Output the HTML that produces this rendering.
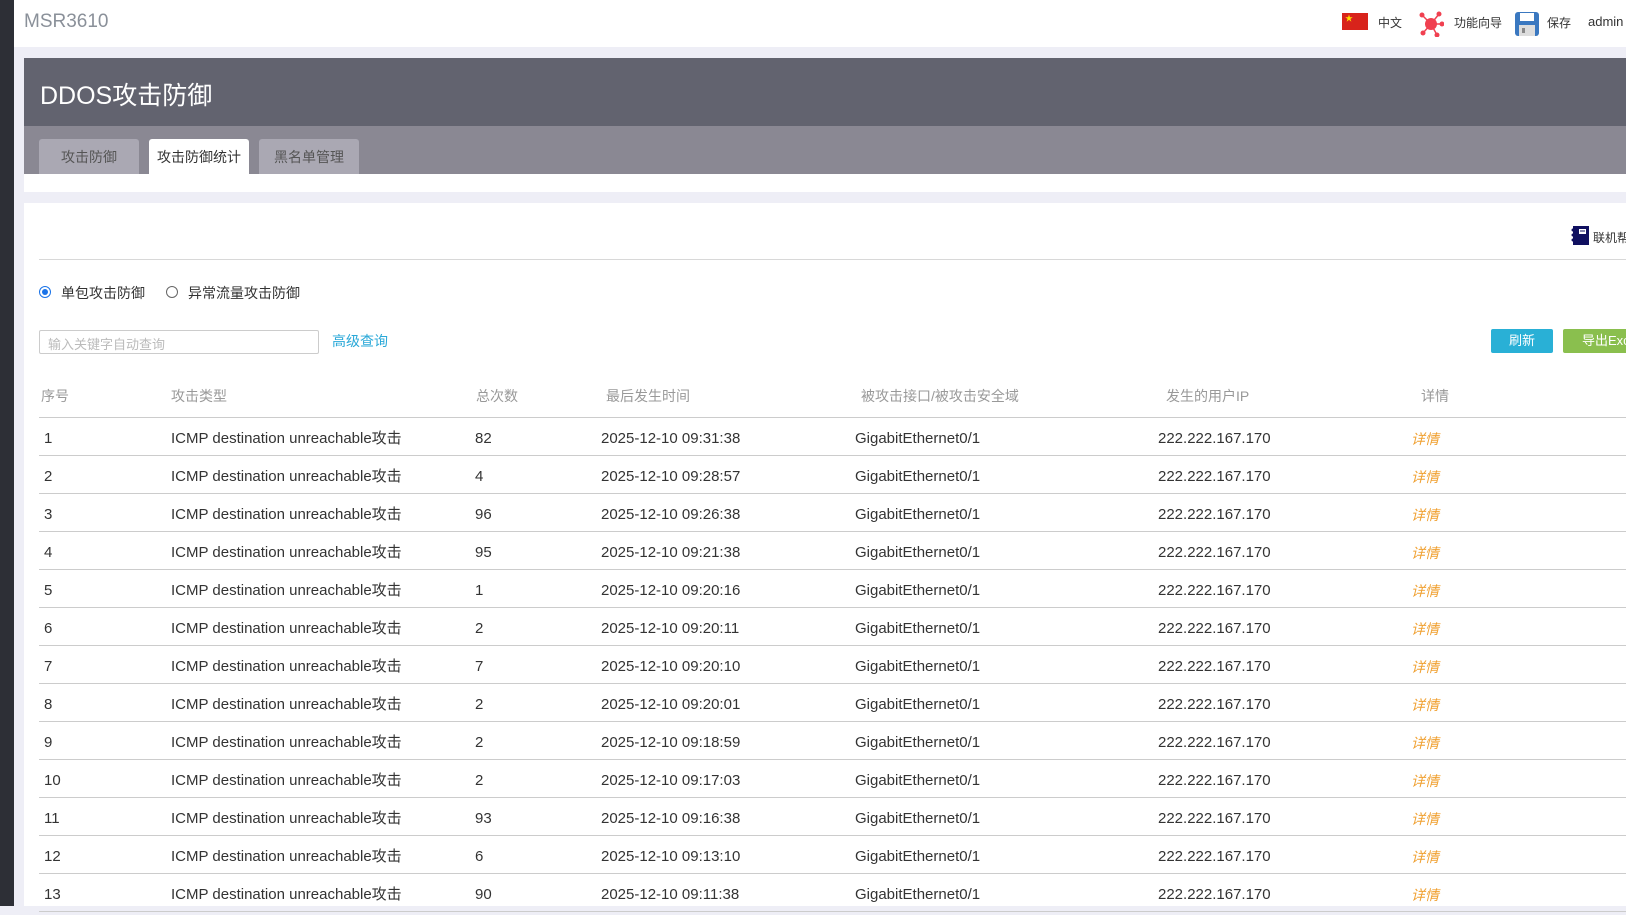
<!DOCTYPE html>
<html><head><meta charset="utf-8"><style>
*{margin:0;padding:0;box-sizing:border-box}
body{width:1626px;height:906px;overflow:hidden;background:#eeeef6;font-family:"Liberation Sans","Noto Sans CJK SC",sans-serif;position:relative;color:#333}
.abs{position:absolute}
.side{left:0;top:0;width:14px;height:906px;background:#2d2f36}
.hdr{left:14px;top:0;width:1612px;height:47px;background:#fff}
.banner{left:24px;top:58px;width:1602px;height:68px;background:#62636f}
.tabs{left:24px;top:126px;width:1602px;height:48px;background:#8a8893}
.tab{top:139px;width:100px;height:35px;background:#aaa8b3;border-radius:3px 3px 0 0;font-size:14px;color:#555;text-align:center;line-height:36px}
.wb{left:24px;top:174px;width:1602px;height:18px;background:#fff}
.content{left:24px;top:203px;width:1602px;height:703px;background:#fff}
.th{top:386px;font-size:14px;color:#999}
.row{left:39px;width:1587px;height:38px;border-bottom:1px solid #ccc;font-size:15px;color:#333}
.row span{position:absolute;top:2px;height:38px;line-height:38px;white-space:nowrap}
.row i{color:#f0a030;font-size:14px}
</style></head><body>
<div class="abs side"></div>
<div class="abs hdr"></div>
<div class="abs" style="left:24px;top:11px;font-size:19px;color:#8a9099">MSR3610</div>
<div class="abs" style="left:1342px;top:13px;width:26px;height:17px;background:#d8231b"><span style="position:absolute;left:3px;top:0;color:#ffdd00;font-size:8px">★</span></div>
<div class="abs" style="left:1378px;top:14px;font-size:12px;color:#333">中文</div>
<svg class="abs" style="left:1418px;top:11px" width="26" height="26" viewBox="0 0 26 26"><g stroke="#f04050" stroke-width="1.5"><line x1="13" y1="13" x2="4" y2="4"/><line x1="13" y1="13" x2="21" y2="3"/><line x1="13" y1="13" x2="24" y2="13"/><line x1="13" y1="13" x2="5" y2="22"/><line x1="13" y1="13" x2="19" y2="24"/></g><g fill="#f04050"><circle cx="13" cy="13" r="6"/><circle cx="4" cy="4" r="2.5"/><circle cx="21" cy="3" r="2.5"/><circle cx="24" cy="13" r="2.5"/><circle cx="5" cy="22" r="2.5"/><circle cx="19" cy="24" r="2.5"/></g></svg>
<div class="abs" style="left:1454px;top:14px;font-size:12px;color:#333">功能向导</div>
<svg class="abs" style="left:1515px;top:12px" width="24" height="24" viewBox="0 0 24 24"><rect x="0" y="0" width="24" height="24" rx="3" fill="#3a78c0"/><rect x="5" y="1" width="14" height="8" fill="#fff"/><rect x="4" y="13" width="16" height="11" fill="#ddd"/><rect x="7" y="16" width="3" height="5" fill="#888"/></svg>
<div class="abs" style="left:1547px;top:14px;font-size:12px;color:#333">保存</div>
<div class="abs" style="left:1588px;top:14px;font-size:13px;color:#333">admin</div>
<div class="abs banner"></div>
<div class="abs" style="left:40px;top:76px;font-size:25px;color:#fff">DDOS攻击防御</div>
<div class="abs tabs"></div>
<div class="abs tab" style="left:39px">攻击防御</div>
<div class="abs tab" style="left:149px;background:#fff;color:#333">攻击防御统计</div>
<div class="abs tab" style="left:259px">黑名单管理</div>
<div class="abs wb"></div>
<div class="abs content"></div>
<svg class="abs" style="left:1571px;top:226px" width="18" height="19" viewBox="0 0 18 19"><rect x="2" y="0" width="16" height="19" fill="#101060"/><rect x="8" y="3" width="7" height="5" fill="#fff"/><rect x="9" y="4.5" width="5" height="1" fill="#101060"/><g fill="#101060"><circle cx="2" cy="4" r="1.5"/><circle cx="2" cy="9" r="1.5"/><circle cx="2" cy="14" r="1.5"/></g></svg>
<div class="abs" style="left:1593px;top:229px;font-size:12px;color:#333;white-space:nowrap">联机帮助</div>
<div class="abs" style="left:39px;top:259px;width:1587px;height:1px;background:#d8d8d8"></div>
<div class="abs" style="left:39px;top:286px;width:12px;height:12px;border:1px solid #1a73e8;border-radius:50%"><div style="margin:2px;width:6px;height:6px;border-radius:50%;background:#1a73e8"></div></div>
<div class="abs" style="left:61px;top:283px;font-size:14px">单包攻击防御</div>
<div class="abs" style="left:166px;top:286px;width:12px;height:12px;border:1px solid #666;border-radius:50%"></div>
<div class="abs" style="left:188px;top:283px;font-size:14px">异常流量攻击防御</div>
<div class="abs" style="left:39px;top:330px;width:280px;height:24px;border:1px solid #ccc;border-radius:2px;font-size:13px;color:#bbb;padding:3px 8px">输入关键字自动查询</div>
<div class="abs" style="left:332px;top:331px;font-size:14px;color:#29a8d8">高级查询</div>
<div class="abs" style="left:1491px;top:329px;width:62px;height:24px;background:#29b0d6;border-radius:2px;color:#fff;font-size:13px;text-align:center;line-height:24px">刷新</div>
<div class="abs" style="left:1563px;top:329px;width:70px;height:24px;background:#8abf4e;border-radius:2px;color:#fff;font-size:13px;padding-left:19px;line-height:24px;white-space:nowrap">导出Excel</div>
<div class="abs th" style="left:41px">序号</div>
<div class="abs th" style="left:171px">攻击类型</div>
<div class="abs th" style="left:476px">总次数</div>
<div class="abs th" style="left:606px">最后发生时间</div>
<div class="abs th" style="left:861px">被攻击接口/被攻击安全域</div>
<div class="abs th" style="left:1166px">发生的用户IP</div>
<div class="abs th" style="left:1421px">详情</div>
<div class="abs" style="left:39px;top:417px;width:1587px;height:1px;background:#ccc"></div>
<div id="rows"></div>
<script>
var d=[["1","82","09:31:38"],["2","4","09:28:57"],["3","96","09:26:38"],["4","95","09:21:38"],["5","1","09:20:16"],["6","2","09:20:11"],["7","7","09:20:10"],["8","2","09:20:01"],["9","2","09:18:59"],["10","2","09:17:03"],["11","93","09:16:38"],["12","6","09:13:10"],["13","90","09:11:38"]];
var h="";d.forEach(function(r,i){h+='<div class="abs row" style="top:'+(418+i*38)+'px"><span style="left:5px">'+r[0]+'</span><span style="left:132px">ICMP destination unreachable攻击</span><span style="left:436px">'+r[1]+'</span><span style="left:562px">2025-12-10 '+r[2]+'</span><span style="left:816px">GigabitEthernet0/1</span><span style="left:1119px">222.222.167.170</span><span style="left:1372px"><i>详情</i></span></div>'});
document.getElementById("rows").innerHTML=h;
</script>
</body></html>
